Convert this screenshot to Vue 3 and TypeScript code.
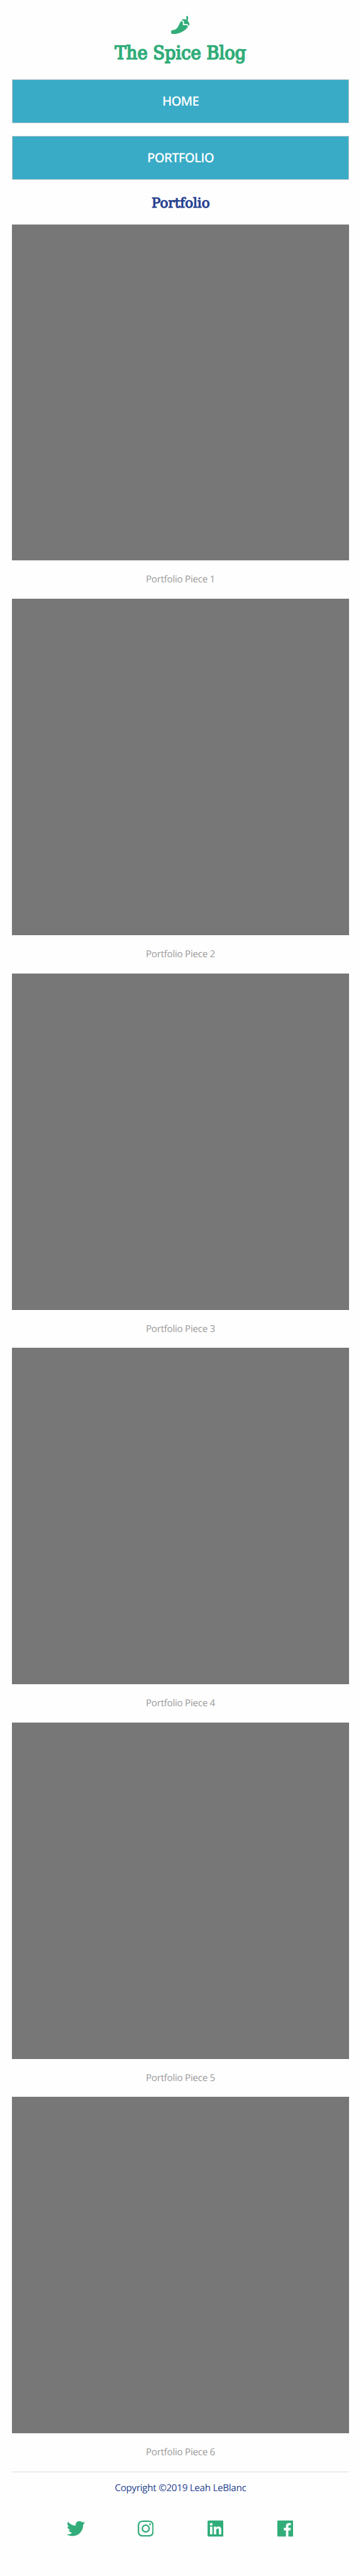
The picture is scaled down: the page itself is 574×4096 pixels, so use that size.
<script setup lang="ts">
interface Social {
  name: string
  viewBox: string
  path: string
}

const links: string[] = ['Home', 'Portfolio']
const pieces: number[] = [1, 2, 3, 4, 5, 6]

const pepper =
  'M330.67 263.12V173.4l-52.75-24.22C219.44 218.76 197.58 400 56 400a56 56 0 0 0 0 112c212.64 0 370.65-122.87 419.18-210.34l-37.05-38.54zm131.09-128.37C493.92 74.91 477.18 26.48 458.62 3a8 8 0 0 0-11.93-.59l-22.9 23a8.06 8.06 0 0 0-.89 10.23c6.86 10.36 17.05 35.1-1.4 72.32A142.85 142.85 0 0 0 364.34 96c-28 0-54 8.54-76.34 22.59l74.67 34.29v78.24h89.09L506.44 288c3.26-12.62 5.56-25.63 5.56-39.31a154 154 0 0 0-50.24-113.94z'

const socials: Social[] = [
  {
    name: 'Twitter',
    viewBox: '0 0 512 512',
    path: 'M459.37 151.716c.325 4.548.325 9.097.325 13.645 0 138.72-105.583 298.558-298.558 298.558-59.452 0-114.68-17.219-161.137-47.106 8.447.974 16.568 1.299 25.34 1.299 49.055 0 94.213-16.568 130.274-44.832-46.132-.975-84.792-31.188-98.112-72.772 6.498.974 12.995 1.624 19.818 1.624 9.421 0 18.843-1.3 27.614-3.573-48.081-9.747-84.143-51.98-84.143-102.985v-1.299c13.969 7.797 30.214 12.67 47.431 13.319-28.264-18.843-46.781-51.005-46.781-87.391 0-19.492 5.197-37.36 14.294-52.954 51.655 63.675 129.3 105.258 216.365 109.807-1.624-7.797-2.599-15.918-2.599-24.04 0-57.828 46.782-104.934 104.934-104.934 30.213 0 57.502 12.67 76.67 33.137 23.715-4.548 46.456-13.32 66.599-25.34-7.798 24.366-24.366 44.833-46.132 57.827 21.117-2.273 41.584-8.122 60.426-16.243-14.292 20.791-32.161 39.308-52.628 54.253z',
  },
  {
    name: 'Instagram',
    viewBox: '0 0 448 512',
    path: 'M224.1 141c-63.6 0-114.9 51.3-114.9 114.9s51.3 114.9 114.9 114.9S339 319.5 339 255.9 287.7 141 224.1 141zm0 189.6c-41.1 0-74.7-33.5-74.7-74.7s33.5-74.7 74.7-74.7 74.7 33.5 74.7 74.7-33.6 74.7-74.7 74.7zm146.4-194.3c0 14.9-12 26.8-26.8 26.8-14.9 0-26.8-12-26.8-26.8s12-26.8 26.8-26.8 26.8 12 26.8 26.8zm76.1 27.2c-1.7-35.9-9.9-67.7-36.2-93.9-26.2-26.2-58-34.4-93.9-36.2-37-2.1-147.9-2.1-184.9 0-35.8 1.7-67.6 9.9-93.9 36.1s-34.4 58-36.2 93.9c-2.1 37-2.1 147.9 0 184.9 1.7 35.9 9.9 67.7 36.2 93.9s58 34.4 93.9 36.2c37 2.1 147.9 2.1 184.9 0 35.9-1.7 67.7-9.9 93.9-36.2 26.2-26.2 34.4-58 36.2-93.9 2.1-37 2.1-147.8 0-184.8zM398.8 388c-7.8 19.6-22.9 34.7-42.6 42.6-29.5 11.7-99.5 9-132.1 9s-102.7 2.6-132.1-9c-19.6-7.8-34.7-22.9-42.6-42.6-11.7-29.5-9-99.5-9-132.1s-2.6-102.7 9-132.1c7.8-19.6 22.9-34.7 42.6-42.6 29.5-11.7 99.5-9 132.1-9s102.7-2.6 132.1 9c19.6 7.8 34.7 22.9 42.6 42.6 11.7 29.5 9 99.5 9 132.1s2.7 102.7-9 132.1z',
  },
  {
    name: 'LinkedIn',
    viewBox: '0 0 448 512',
    path: 'M416 32H31.9C14.3 32 0 46.5 0 64.3v383.4C0 465.5 14.3 480 31.9 480H416c17.6 0 32-14.5 32-32.3V64.3c0-17.8-14.4-32.3-32-32.3zM135.4 416H69V202.2h66.5V416zm-33.2-243c-21.3 0-38.5-17.3-38.5-38.5S80.9 96 102.2 96c21.2 0 38.5 17.3 38.5 38.5 0 21.3-17.2 38.5-38.5 38.5zm282.1 243h-66.4V312c0-24.8-.5-56.7-34.5-56.7-34.6 0-39.9 27-39.9 54.9V416h-66.4V202.2h63.7v29.2h.9c8.9-16.8 30.6-34.5 62.9-34.5 67.2 0 79.7 44.3 79.7 101.9V416z',
  },
  {
    name: 'Facebook',
    viewBox: '0 0 448 512',
    path: 'M448 56.7v398.5c0 13.7-11.1 24.7-24.7 24.7H309.1V306.5h58.2l8.7-67.6h-67v-43.2c0-19.6 5.4-32.9 33.5-32.9h35.8v-60.5c-6.2-.8-27.4-2.7-52.2-2.7-51.6 0-87 31.5-87 89.4v49.9h-58.4v67.6h58.4V480H24.7C11.1 480 0 468.9 0 455.3V56.7C0 43.1 11.1 32 24.7 32h398.5c13.7 0 24.8 11.1 24.8 24.7z',
  },
]
</script>

<template>
  <div class="page">
    <header>
      <svg class="pepper" viewBox="0 0 512 512" aria-hidden="true"><path :d="pepper" /></svg>
      <h1>
        <svg class="title" viewBox="0 0 882 70">
          <text x="269.5" y="49.5" textLength="344" lengthAdjust="spacingAndGlyphs">The Spice Blog</text>
        </svg>
      </h1>
      <nav>
        <a v-for="link in links" :key="link" class="nav-link">{{ link }}</a>
      </nav>
    </header>

    <main>
      <h2>
        <svg class="subtitle" viewBox="0 0 882 116">
          <text x="366" y="71.8" textLength="152.5" lengthAdjust="spacingAndGlyphs">Portfolio</text>
        </svg>
      </h2>
      <figure v-for="n in pieces" :key="n">
        <div class="piece"></div>
        <figcaption>Portfolio Piece {{ n }}</figcaption>
      </figure>
    </main>

    <footer>
      <p>Copyright ©2019 Leah LeBlanc</p>
      <div class="socials">
        <a v-for="s in socials" :key="s.name" :aria-label="s.name">
          <svg class="icon" :viewBox="s.viewBox"><path :d="s.path" /></svg>
        </a>
      </div>
    </footer>
  </div>
</template>

<style>
body {
  margin: 0;
  background: #fefefe;
}
</style>

<style scoped>
.page {
  --u: calc(4096px / 6754);
  box-sizing: border-box;
  width: 574px;
  height: 4096px;
  overflow: hidden;
  padding: calc(42 * var(--u)) calc(32 * var(--u)) 0;
  background: #fefefe;
  font-family: 'Open Sans', sans-serif;
  font-size: calc(25 * var(--u));
  letter-spacing: calc(-0.45 * var(--u));
  text-rendering: geometricPrecision;
}

h1,
h2,
p,
figure {
  margin: 0;
}

svg {
  display: block;
}

.pepper {
  width: calc(48 * var(--u));
  height: calc(48 * var(--u));
  margin: 0 auto;
  fill: #32ad7a;
}

h1 {
  margin: calc(16 * var(--u)) 0 calc(32 * var(--u));
}

.title,
.subtitle {
  width: 100%;
  font-family: 'DejaVu Serif Condensed', 'DejaVu Serif', serif;
  font-weight: 400;
  letter-spacing: 0;
}

.title {
  height: calc(70 * var(--u));
  font-size: 48.5px;
  fill: #32ad7a;
  stroke: #32ad7a;
  stroke-width: 2.8px;
}

.subtitle {
  height: calc(116 * var(--u));
  font-size: 35.5px;
  fill: #25408f;
  stroke: #25408f;
  stroke-width: 1.7px;
}

nav {
  display: flex;
  flex-direction: column;
  gap: calc(32 * var(--u));
}

.nav-link {
  box-sizing: border-box;
  height: calc(116 * var(--u));
  border: calc(2 * var(--u)) solid #ccc;
  background: #39abc7;
  color: #fefefe;
  font-size: calc(33.5 * var(--u));
  font-weight: 600;
  letter-spacing: calc(-1.3 * var(--u));
  line-height: calc(112 * var(--u));
  text-align: center;
  text-transform: uppercase;
}

.piece {
  height: calc(882 * var(--u));
  background: #777;
}

figcaption {
  height: calc(100 * var(--u));
  color: #999;
  line-height: calc(100 * var(--u));
  text-align: center;
}

footer {
  border-top: calc(2 * var(--u)) solid #ddd;
}

p {
  height: calc(124 * var(--u));
  color: #25408f;
  line-height: calc(84 * var(--u));
  text-align: center;
}

.socials {
  display: grid;
  grid-template-columns: repeat(4, 1fr);
  width: calc(731 * var(--u));
  margin: 0 auto;
}

.icon {
  height: calc(48 * var(--u));
  margin: 0 auto;
  fill: #32ad7a;
}
</style>
